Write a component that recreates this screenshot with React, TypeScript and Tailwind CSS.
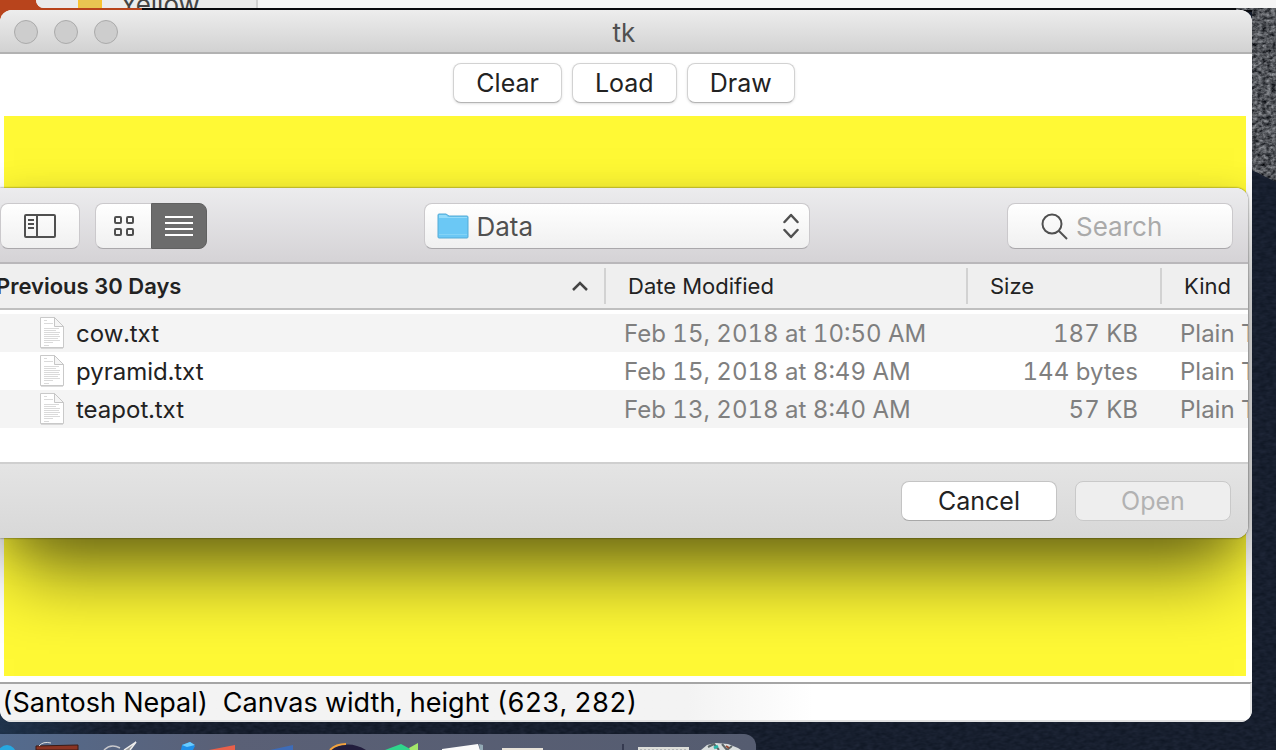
import React from "react";

const font = "font-['Inter','Roboto','Liberation_Sans',sans-serif]";

const files = [
  { name: "cow.txt", date: "Feb 15, 2018 at 10:50 AM", size: "187 KB" },
  { name: "pyramid.txt", date: "Feb 15, 2018 at 8:49 AM", size: "144 bytes" },
  { name: "teapot.txt", date: "Feb 13, 2018 at 8:40 AM", size: "57 KB" },
];

function Wallpaper() {
  return (
    <svg className="absolute inset-0 h-full w-full" aria-hidden="true">
      <defs>
        <filter id="rock" x="0" y="0" width="100%" height="100%" colorInterpolationFilters="sRGB">
          <feTurbulence type="fractalNoise" baseFrequency="0.22 0.3" numOctaves="3" seed="4" />
          <feColorMatrix values="0.8 0 0 0 -0.08  0.8 0 0 0 -0.07  0.8 0 0 0 -0.05  0 0 0 0 1" />
          <feComposite in2="SourceGraphic" operator="in" />
        </filter>
        <filter id="water" x="0" y="0" width="100%" height="100%" colorInterpolationFilters="sRGB">
          <feTurbulence type="fractalNoise" baseFrequency="0.15 0.3" numOctaves="2" seed="9" />
          <feColorMatrix values="0.08 0 0 0 0.05  0.08 0 0 0 0.08  0.1 0 0 0 0.13  0 0 0 0 1" />
        </filter>
        <linearGradient id="glow">
          <stop offset="0" stopColor="#24405f" />
          <stop offset="1" stopColor="#24405f" stopOpacity="0" />
        </linearGradient>
      </defs>
      <rect width="100%" height="100%" filter="url(#water)" />
      <rect y="700" width="110" height="50" fill="url(#glow)" opacity=".6" />
      <rect width="100%" height="12" fill="#08090d" />
      <svg x="100%" overflow="visible">
        <path d="M-40 0H0V182L-24 170V10H-40Z" filter="url(#rock)" />
      </svg>
      <rect width="142" height="40" fill="#b8441c" />
    </svg>
  );
}

function FileIcon() {
  return (
    <svg width="26" height="34" viewBox="0 0 26 34" aria-hidden="true">
      <path d="M2 2H16L24 10V32H2Z" fill="#bbb" opacity=".5" transform="translate(0 1)" />
      <path d="M1.500 1.500H15.500L24.500 10.500V31.500H1.500Z" fill="#fff" stroke="#c9c9c9" />
      <path d="M15.500 1.500V10.500H24.500Z" fill="#f5f5f5" stroke="#c6c6c6" />
      <path d="M5 4.500h3M5 7.500h9M5 12.500h15M5 14.500h12M5 16.500h16M5 18.500h15M5 20.500h16M5 22.500h14M5 24.500h16M5 26.500h9M5 29.500h5" stroke="#dadada" />
    </svg>
  );
}

const toolButton =
  "h-10 rounded-lg border border-[#d2d2d2] border-b-[#b4b4b4] bg-white px-[22px] text-[25px] leading-9 text-[#222] shadow-sm";
const chrome =
  "h-[46px] rounded-lg border border-[#cbc9cc] border-b-[#aaa8ab] bg-linear-to-b from-white to-[#f0f0f0]";

function OpenSheet() {
  return (
    <section
      aria-label="Open file"
      className="absolute top-[178px] right-1 left-0 overflow-hidden rounded-r-xl bg-white shadow-[0_0_2px_rgba(0,0,0,0.7),0_50px_70px_-14px_rgba(0,0,0,0.5),0_10px_40px_rgba(0,0,0,0.2)]"
    >
      <div className="flex h-[76px] items-center border-b-2 border-[#b9b7ba] bg-linear-to-b from-[#ececee] to-[#d5d3d6] pt-[2px] pr-[15px]">
        <div className="flex flex-1 gap-[15px]">
          <button aria-label="Toggle sidebar" className={"flex w-20 items-center justify-center pr-px " + chrome}>
            <svg width="32" height="24" viewBox="0 0 32 24" fill="none" stroke="#505050" strokeWidth="2">
              <rect x="1" y="1" width="30" height="22" rx="1" />
              <path d="M13 1V23M4 6h6M4 10h6M4 14h6" />
            </svg>
          </button>
          <div className="flex">
            <button aria-label="Icon view" className={"flex w-14 items-center justify-center rounded-r-none border-r-0 " + chrome}>
              <svg width="20" height="20" viewBox="0 0 20 20" fill="none" stroke="#505050" strokeWidth="2">
                <rect x="1" y="1" width="6" height="6" rx="1" />
                <rect x="13" y="1" width="6" height="6" rx="1" />
                <rect x="1" y="13" width="6" height="6" rx="1" />
                <rect x="13" y="13" width="6" height="6" rx="1" />
              </svg>
            </button>
            <button aria-label="List view" className="flex h-[46px] w-14 items-center justify-center rounded-r-lg border border-[#616161] bg-[#6c6c6c]">
              <svg width="28" height="20" viewBox="0 0 28 20" stroke="#fff" strokeWidth="2">
                <path d="M0 1H28M0 7H28M0 13H28M0 19H28" />
              </svg>
            </button>
          </div>
        </div>
        <button className={"flex w-[386px] items-center px-3 text-[26px] leading-8 text-[#505050] " + chrome}>
          <svg width="32" height="26" viewBox="0 0 32 26" className="mr-2" aria-hidden="true">
            <path d="M1 2Q1 1 2 1H9L12 3H30Q31 3 31 4V24Q31 25 30 25H2Q1 25 1 24Z" fill="#6bc8f5" stroke="#55abd6" />
            <path d="M2 2H9L11 4H30V5H2Z" fill="#94dbfa" />
            <path d="M2 21.500H30" stroke="#83d3f7" />
          </svg>
          <span className="pt-[2px]">Data</span>
          <svg width="16" height="26" viewBox="0 0 16 26" fill="none" stroke="#505050" strokeWidth="2.500" strokeLinecap="round" strokeLinejoin="round" className="-mr-[2px] ml-auto" aria-hidden="true">
            <path d="M1.500 9L8 2L14.500 9M1.500 17L8 24L14.500 17" />
          </svg>
        </button>
        <div className="flex flex-1 justify-end">
          <label className={"flex w-[226px] items-center pl-[33px] " + chrome}>
            <svg width="27" height="27" viewBox="0 0 27 27" fill="none" stroke="#505050" strokeWidth="2" aria-hidden="true">
              <circle cx="11" cy="11" r="9.500" />
              <path d="M18 18L26 26" />
            </svg>
            <input aria-label="Search" placeholder="Search" className="ml-2 w-32 bg-transparent pt-[2px] text-[26px] leading-8 outline-none placeholder:text-[#aaa]" />
          </label>
        </div>
      </div>
      <div className="h-[198px] overflow-hidden">
        <table className="w-full table-fixed border-collapse text-left">
          <colgroup>
            <col />
            <col className="w-[362px]" />
            <col className="w-[194px]" />
            <col className="w-[88px]" />
          </colgroup>
          <thead>
            <tr className="h-[45px] border-b-2 border-[#bfbfbf] bg-[#efefef] text-[22px] leading-7 text-[#222]">
              <th className="p-0 font-semibold">
                <div className="-ml-1 flex items-center justify-between pr-4">
                  Previous 30 Days
                  <svg width="16" height="10" viewBox="0 0 16 10" fill="none" stroke="#444" strokeWidth="2.500" aria-hidden="true">
                    <path d="M1 9L8 2L15 9" />
                  </svg>
                </div>
              </th>
              <th className="p-0 font-normal"><div className="border-l-2 border-[#d2d2d2] py-1 pl-[22px]">Date Modified</div></th>
              <th className="p-0 font-normal"><div className="border-l-2 border-[#d2d2d2] py-1 pl-[22px]">Size</div></th>
              <th className="p-0 font-normal"><div className="border-l-2 border-[#d2d2d2] py-1 pl-[22px]">Kind</div></th>
            </tr>
          </thead>
          <tbody className="text-[24px] leading-7 whitespace-nowrap text-[#7f7f7f] tabular-nums">
            <tr className="h-[5px]" aria-hidden="true"><td colSpan={4} className="p-0" /></tr>
            {files.map((f) => (
              <tr key={f.name} className="h-[38px] odd:bg-white even:bg-[#f4f4f4]">
                <td className="p-0">
                  <div className="flex items-center gap-[11px] pl-[39px] text-[#222]"><FileIcon /><span className="pt-[2px]">{f.name}</span></div>
                </td>
                <td className="p-0 pt-[2px] pl-5">{f.date}</td>
                <td className="p-0 pt-[2px] pr-[22px] text-right">{f.size}</td>
                <td className="overflow-hidden p-0 pt-[2px] pl-5">Plain Text</td>
              </tr>
            ))}
          </tbody>
        </table>
      </div>
      <div className="flex h-[76px] justify-end gap-[18px] border-t-2 border-[#cfcfcf] bg-linear-to-b from-[#e4e4e4] to-[#d8d8d8] pt-[17px] pr-[17px]">
        <button className="h-10 w-[156px] rounded-lg border border-[#c4c4c4] border-b-[#a8a8a8] bg-white text-[25px] leading-9 text-[#222]">Cancel</button>
        <button disabled className="h-10 w-[156px] rounded-lg border border-[#c9c9c9] bg-[#eee] text-[25px] leading-9 text-[#b2b2b2]">Open</button>
      </div>
    </section>
  );
}

function Dock() {
  return (
    <footer className="h-4 w-[756px] overflow-hidden rounded-tr-xl bg-linear-to-r from-[#536b8e] via-[#5a6076] via-30% to-[#555c70]">
      <svg width="756" height="16" viewBox="0 0 756 16" aria-hidden="true">
        <circle cx="7" cy="20" r="9" fill="#27a8e0" />
        <path d="M36 12L78 11V16H36Z" fill="#8a3322" stroke="#3b1a15" />
        <path d="M39 12Q43 7 51 9" stroke="#ddd" strokeWidth="1" fill="none" />
        <path d="M104 16Q111 9 120 14" stroke="#c8c8cc" strokeWidth="1.500" fill="none" />
        <path d="M124 16L136 8L130 16" stroke="#eee" strokeWidth="1.500" fill="#999" />
        <path d="M182 11L190 8L195 12L193 16H181Z" fill="#1f8fe8" />
        <path d="M182 11L190 8L195 11L187 13Z" fill="#69ccff" />
        <path d="M209 16L235 11V16Z" fill="#e8604a" />
        <path d="M270 16L293 11V16Z" fill="#3e6cb8" />
        <path d="M330 16Q348 5 366 16" fill="#221d3d" />
        <path d="M330 16Q336 10 346 10" fill="none" stroke="#f3a23c" strokeWidth="2" />
        <path d="M385 16L401 10L412 16Z" fill="#2fd58c" />
        <path d="M409 14L418 9V16H410Z" fill="#a4e86a" />
        <path d="M442 15L478 10L480 16H442Z" fill="#fafafa" />
        <path d="M479 10L483 11V16H480Z" fill="#93aab5" />
        <path d="M502 14H543V16H502Z" fill="#e7e2d8" />
        <path d="M623 10V16" stroke="#353a50" strokeWidth="2" />
        <path d="M638 13H689V16H638Z" fill="#dcddd9" />
        <path d="M640 15.500H687" stroke="#b4b6b8" strokeDasharray="2 2" />
        <path d="M701 16L707 11L716 9L728 10L738 14L741 16Z" fill="#d9dddd" />
        <path d="M708 13L714 10L719 16M722 10L727 16L732 12" stroke="#5c6568" strokeWidth="2" fill="none" />
        <path d="M714 14l4-2" stroke="#28b5a8" strokeWidth="3" />
        <path d="M726 12l3 2" stroke="#9a4a32" strokeWidth="2" />
      </svg>
    </footer>
  );
}

export default function App() {
  return (
    <div className={"relative flex h-screen flex-col overflow-hidden bg-[#161d2f] " + font}>
      <Wallpaper />
      <div className="relative ml-9 flex h-2 shrink-0 overflow-hidden rounded-bl-lg bg-[#f5f5f5]">
        <div className="flex w-[222px] shrink-0 items-end border-r-2 border-[#d2d2d2] bg-[#ebebeb] pl-[42px]">
          <span className="h-2 w-6 shrink-0 border-x-2 border-[#f7c22f] bg-[#e8c552]" />
          <span className="ml-[18px] text-[26px] leading-[6px] text-[#444]">Yellow</span>
        </div>
      </div>
      <main className="relative mt-[2px] mr-6 flex min-h-0 flex-1 flex-col overflow-hidden rounded-xl bg-white">
        <header className="relative flex h-11 shrink-0 items-center justify-center border-b-2 border-[#b2b2b2] bg-linear-to-b from-[#ededed] to-[#d2d2d2] pt-[3px] pr-1">
          <div className="absolute top-[10px] left-[14px] flex gap-4">
            <button aria-label="Close" className="size-6 rounded-full border border-[#aaa] bg-[#cdcdcd]" />
            <button aria-label="Minimize" className="size-6 rounded-full border border-[#aaa] bg-[#cdcdcd]" />
            <button aria-label="Zoom" className="size-6 rounded-full border border-[#aaa] bg-[#cdcdcd]" />
          </div>
          <h1 className="text-[26px] leading-8 text-[#505050]">tk</h1>
        </header>
        <div className="flex h-[62px] shrink-0 justify-center gap-[10px] pt-[9px] pr-1">
          <button className={toolButton}>Clear</button>
          <button className={toolButton}>Load</button>
          <button className={toolButton}>Draw</button>
        </div>
        <div className="mr-[6px] mb-[6px] ml-1 flex-1 bg-[#fff935]" />
        <OpenSheet />
        <p className="h-10 shrink-0 border-t-2 border-r-2 border-b-2 border-t-[#a5a5a5] border-r-[#e8e8e8] border-b-[#e2e2e2] bg-linear-to-r from-[#f3f3f3] from-55% to-white to-65% pt-px pl-[2px] text-[27px] leading-9 whitespace-pre text-black tabular-nums">
          {"(Santosh Nepal)  Canvas width, height (623, 282)"}
        </p>
      </main>
      <div className="relative mt-3 shrink-0">
        <Dock />
      </div>
    </div>
  );
}
